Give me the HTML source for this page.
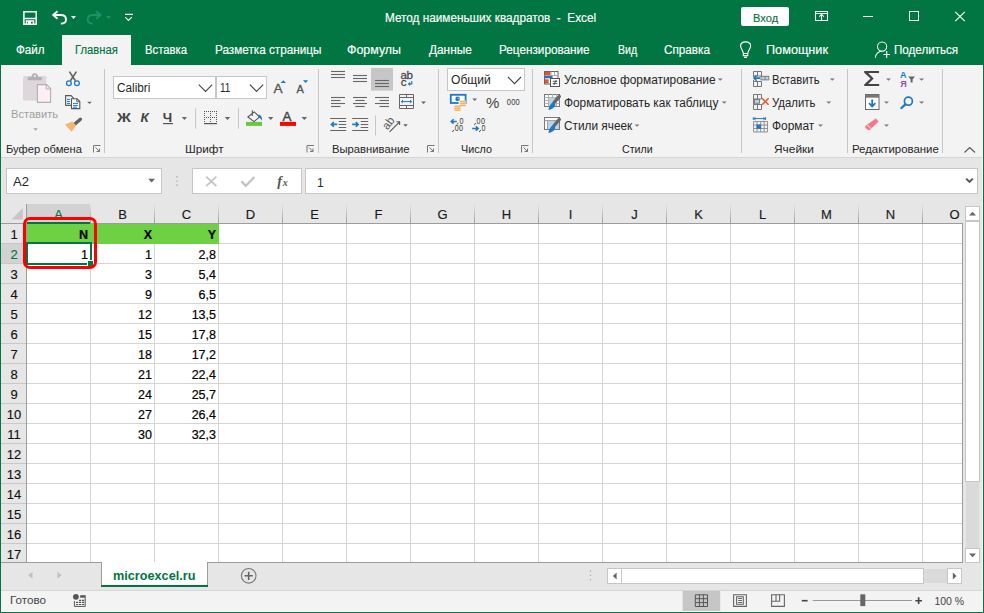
<!DOCTYPE html><html><head><meta charset="utf-8"><style>
*{margin:0;padding:0;box-sizing:border-box}
html,body{width:984px;height:613px;overflow:hidden;background:#f3f3f3;font-family:"Liberation Sans",sans-serif;position:relative}
.a{position:absolute}
.t{position:absolute;white-space:nowrap;line-height:1}

.rb{color:#262626;font-size:12px}
.gl{color:#262626;font-size:12px;top:144px}
.sep{position:absolute;width:1px;background:#d0d0d0}
svg{position:absolute;overflow:visible}
.ch{position:absolute;top:205px;height:19px;font-size:13px;color:#1a1a1a;text-align:center;line-height:20px;-webkit-text-stroke:0.15px currentColor}
.rh{position:absolute;left:1px;width:26px;height:20px;font-size:13px;color:#111;text-align:center;line-height:21px;-webkit-text-stroke:0.15px currentColor}
.c{position:absolute;font-size:12.5px;color:#000;text-align:right;line-height:22px;height:20px;padding-right:2px;-webkit-text-stroke:0.2px #000}
</style></head><body>
<div class="a" style="left:0;top:0;width:984px;height:65px;background:#017542"></div>
<div class="t" style="left:385px;top:12.3px;font-size:12px;color:#fff;transform:scaleX(0.9802);transform-origin:0 0;-webkit-text-stroke:0.15px #fff">Метод наименьших квадратов&nbsp; -&nbsp; Excel</div>
<div class="a" style="left:62px;top:35px;width:69px;height:30px;background:#f3f3f3"></div>
<div class="t" style="left:16px;top:43.6px;font-size:12px;color:#fff;transform:scaleX(0.9695);transform-origin:0 0;-webkit-text-stroke:0.15px currentColor">Файл</div>
<div class="t" style="left:74.8px;top:43.6px;font-size:12px;color:#017542;transform:scaleX(0.9349);transform-origin:0 0;-webkit-text-stroke:0.15px currentColor">Главная</div>
<div class="t" style="left:145px;top:43.6px;font-size:12px;color:#fff;transform:scaleX(0.9418);transform-origin:0 0;-webkit-text-stroke:0.15px currentColor">Вставка</div>
<div class="t" style="left:214.6px;top:43.6px;font-size:12px;color:#fff;transform:scaleX(0.9774);transform-origin:0 0;-webkit-text-stroke:0.15px currentColor">Разметка страницы</div>
<div class="t" style="left:347.4px;top:43.6px;font-size:12px;color:#fff;transform:scaleX(1.0341);transform-origin:0 0;-webkit-text-stroke:0.15px currentColor">Формулы</div>
<div class="t" style="left:429px;top:43.6px;font-size:12px;color:#fff;transform:scaleX(0.9875);transform-origin:0 0;-webkit-text-stroke:0.15px currentColor">Данные</div>
<div class="t" style="left:499.3px;top:43.6px;font-size:12px;color:#fff;transform:scaleX(0.9781);transform-origin:0 0;-webkit-text-stroke:0.15px currentColor">Рецензирование</div>
<div class="t" style="left:617.7px;top:43.6px;font-size:12px;color:#fff;transform:scaleX(0.8801);transform-origin:0 0;-webkit-text-stroke:0.15px currentColor">Вид</div>
<div class="t" style="left:664px;top:43.6px;font-size:12px;color:#fff;transform:scaleX(0.9771);transform-origin:0 0;-webkit-text-stroke:0.15px currentColor">Справка</div>
<div class="t" style="left:765.7px;top:43.6px;font-size:12px;color:#fff;transform:scaleX(1.0567);transform-origin:0 0;-webkit-text-stroke:0.15px currentColor">Помощник</div>
<div class="t" style="left:894.4px;top:43.6px;font-size:12px;color:#fff;transform:scaleX(0.9673);transform-origin:0 0;-webkit-text-stroke:0.15px currentColor">Поделиться</div>
<svg class="a" style="left:0;top:0" width="984" height="160" viewBox="0 0 984 160"><path d="M23.9,11.8 H36.2 V24.2 H23.9 Z M24.3,18.6 H35.7 M26.5,24 V20.9 H33.5 V24 M28.8,24 V22.4 H30.2 V24" fill="none" stroke="#fff" stroke-width="1.5"/><path d="M57.5,11.2 L53.2,15 L57.5,18.8 M53.4,15 H60.5 C63.8,15 66,16.8 66,19.4 C66,22 63.8,23.6 60.8,23.6" fill="none" stroke="#fff" stroke-width="1.9"/><path d="M71,16 H76 L73.5,19 Z" fill="#fff"/><path d="M96.2,11.2 L100.5,15 L96.2,18.8 M100.3,15 H93.2 C89.9,15 87.7,16.8 87.7,19.4 C87.7,22 89.9,23.6 92.9,23.6" fill="none" stroke="#1f9068" stroke-width="1.9"/><path d="M106,16 H111 L108.5,19 Z" fill="#1f9068"/><path d="M125,14.4 H133 M125.2,17.1 L128.5,20.4 L131.8,17.1" fill="none" stroke="#fff" stroke-width="1.2"/><rect x="741" y="7" width="48" height="19" rx="2" fill="#fff"/><path d="M815.5,11.5 H827.5 V20.5 H815.5 Z M815.5,13.5 H827.5 M821.5,20.5 V14 M819.3,16.6 L821.5,14.4 L823.7,16.6" fill="none" stroke="#fff" stroke-width="1.1"/><path d="M863,16.5 H873" stroke="#fff" stroke-width="1"/><rect x="909.5" y="11.5" width="9" height="9" fill="none" stroke="#fff" stroke-width="1"/><path d="M955.2,11.8 L964.8,21.2 M964.8,11.8 L955.2,21.2" stroke="#fff" stroke-width="1.1"/><path d="M743.3,53.5 C743.3,50.5 740.6,49 740.6,46 C740.6,42.9 743,41.9 745.5,41.9 C748,41.9 750.6,42.9 750.6,46 C750.6,49 747.8,50.5 747.8,53.5 Z M743.3,53.5 V55.6 H747.8 V53.5 M744,57.4 H747" fill="none" stroke="#fff" stroke-width="1.1"/><circle cx="882.1" cy="46.6" r="4.6" fill="none" stroke="#fff" stroke-width="1.1"/><path d="M875.3,57.8 C875.8,54 878.2,51.4 882,51.2 M883.4,54.5 H890 M886.7,51.1 V58" fill="none" stroke="#fff" stroke-width="1.1"/><path d="M104.5,69 V153" stroke="#c6c6c6" stroke-width="1"/><path d="M318.5,69 V153" stroke="#c6c6c6" stroke-width="1"/><path d="M438.5,69 V153" stroke="#c6c6c6" stroke-width="1"/><path d="M532.5,69 V153" stroke="#c6c6c6" stroke-width="1"/><path d="M741.5,69 V153" stroke="#c6c6c6" stroke-width="1"/><path d="M847.5,69 V153" stroke="#c6c6c6" stroke-width="1"/><path d="M942.5,69 V153" stroke="#c6c6c6" stroke-width="1"/><path d="M93.5,152.5 V145.5 H100.5 M95.5,147.5 L99.5,151.5 M96.5,151.5 H99.5 V148.5" fill="none" stroke="#777" stroke-width="1"/><path d="M307.0,152.5 V145.5 H314.0 M309.0,147.5 L313.0,151.5 M310.0,151.5 H313.0 V148.5" fill="none" stroke="#777" stroke-width="1"/><path d="M427.5,152.5 V145.5 H434.5 M429.5,147.5 L433.5,151.5 M430.5,151.5 H433.5 V148.5" fill="none" stroke="#777" stroke-width="1"/><path d="M521.5,152.5 V145.5 H528.5 M523.5,147.5 L527.5,151.5 M524.5,151.5 H527.5 V148.5" fill="none" stroke="#777" stroke-width="1"/><path d="M964.5,152.5 L969.7,147.5 L975,152.5" fill="none" stroke="#555" stroke-width="1.1"/><rect x="23" y="76" width="23.4" height="24.5" rx="1.5" fill="#ddd6da"/><path d="M27.8,80.3 V77 H31.5 C31.5,74.8 32.8,73.2 34.8,73.2 C36.8,73.2 38.1,74.8 38.1,77 H41.8 V80.3 Z" fill="#b5aeb2"/><circle cx="34.8" cy="76" r="1.1" fill="#f3f3f3"/><path d="M37.4,84.6 H46.6 L50.6,88.6 V102.4 H37.4 Z" fill="#fbeef4" stroke="#b5aeb2" stroke-width="1.1"/><path d="M46.2,84.6 V89 H50.6" fill="none" stroke="#b5aeb2" stroke-width="1"/><path d="M33.3,128.3 H37.8 L35.55,130.8 Z" fill="#a6a6a6"/><path d="M69.4,71.6 L75.4,80.8 M76.4,71.6 L70.4,80.8" stroke="#666" stroke-width="1.7"/><circle cx="68.9" cy="83.3" r="2.4" fill="none" stroke="#1e78c4" stroke-width="1.3"/><circle cx="76.9" cy="83.3" r="2.4" fill="none" stroke="#1e78c4" stroke-width="1.3"/><path d="M65.6,105.4 V95.6 H71 L73.6,98.2 V99" fill="none" stroke="#555" stroke-width="1.1"/><path d="M65.6,105.4 H71" fill="none" stroke="#555" stroke-width="1.1"/><path d="M71.5,108.6 V98.8 H77 L79.8,101.6 V108.6 Z" fill="#fff" stroke="#555" stroke-width="1.1"/><path d="M76.8,98.8 V101.8 H79.8" fill="none" stroke="#555" stroke-width="0.9"/><path d="M67,99.4 H70 M67,101.6 H70 M67,103.6 H70 M73,103.4 H78 M73,105.4 H78 M73,107.2 H77" stroke="#1e78c4" stroke-width="1"/><path d="M87.2,101.8 H91.8 L89.5,104 Z" fill="#666"/><path d="M80.4,119.2 L74.6,124.2" stroke="#606060" stroke-width="3.4" stroke-linecap="round"/><path d="M65,124.6 L72.4,121.6 L76.2,125.6 L71.6,131.8 Z" fill="#f6b46c"/><rect x="113.5" y="76.5" width="102" height="22" fill="#fff" stroke="#c6c6c6"/><rect x="216.5" y="76.5" width="50" height="22" fill="#fff" stroke="#c6c6c6"/><path d="M198.8,84.6 L205.5,91.4 L212.2,84.6 M249.9,84.6 L256.5,91.4 L263.2,84.6" fill="none" stroke="#444" stroke-width="1.1"/><path d="M280.6,83 L283.3,80.3 L286,83 Z M303,80.3 H308.2 L305.6,83 Z" fill="#1e78c4"/><path d="M181.8,117 H187 L184.4,120 Z M224.7,117 H230.3 L227.5,120 Z M268,117 H273.4 L270.7,120 Z M301.5,117 H307.2 L304.3,120 Z" fill="#666"/><path d="M163.1,123.6 H173" stroke="#4a4a4a" stroke-width="1.1"/><path d="M195.6,108 V128.7 M238.5,108 V128.7" stroke="#c6c6c6" stroke-width="1"/><rect x="204" y="111" width="1" height="1" fill="#555"/><rect x="206" y="111" width="1" height="1" fill="#555"/><rect x="208" y="111" width="1" height="1" fill="#555"/><rect x="210" y="111" width="1" height="1" fill="#555"/><rect x="212" y="111" width="1" height="1" fill="#555"/><rect x="214" y="111" width="1" height="1" fill="#555"/><rect x="216" y="111" width="1" height="1" fill="#555"/><rect x="204" y="117" width="1" height="1" fill="#555"/><rect x="206" y="117" width="1" height="1" fill="#555"/><rect x="208" y="117" width="1" height="1" fill="#555"/><rect x="210" y="117" width="1" height="1" fill="#555"/><rect x="212" y="117" width="1" height="1" fill="#555"/><rect x="214" y="117" width="1" height="1" fill="#555"/><rect x="216" y="117" width="1" height="1" fill="#555"/><rect x="204" y="113" width="1" height="1" fill="#555"/><rect x="210" y="113" width="1" height="1" fill="#555"/><rect x="216" y="113" width="1" height="1" fill="#555"/><rect x="204" y="115" width="1" height="1" fill="#555"/><rect x="210" y="115" width="1" height="1" fill="#555"/><rect x="216" y="115" width="1" height="1" fill="#555"/><rect x="204" y="119" width="1" height="1" fill="#555"/><rect x="210" y="119" width="1" height="1" fill="#555"/><rect x="216" y="119" width="1" height="1" fill="#555"/><rect x="204" y="121" width="1" height="1" fill="#555"/><rect x="210" y="121" width="1" height="1" fill="#555"/><rect x="216" y="121" width="1" height="1" fill="#555"/><rect x="204" y="123" width="13" height="1.2" fill="#555"/><path d="M252.3,110.3 V116 M247.9,117 L254.3,111.9 L259.6,117 L254,121.6 Z" fill="none" stroke="#555" stroke-width="1.1"/><path d="M258.6,114.6 C261.2,115.4 262.6,117.6 261.8,120.8 C261,119.2 260.2,118 259,117.4 Z" fill="#1e78c4"/><rect x="246" y="121.9" width="16.1" height="4" fill="#6cc644"/><rect x="280" y="121.9" width="16" height="4" fill="#ff0000"/><path d="M331,71.5 H345" stroke="#666" stroke-width="1.1"/><path d="M331,74.5 H345" stroke="#666" stroke-width="1.1"/><path d="M331,77.5 H345" stroke="#666" stroke-width="1.1"/><path d="M353,75.5 H367" stroke="#666" stroke-width="1.1"/><path d="M353,78.5 H367" stroke="#666" stroke-width="1.1"/><path d="M353,81.5 H367" stroke="#666" stroke-width="1.1"/><rect x="371" y="68" width="22" height="22.6" fill="#c6c6c6"/><path d="M375,80.5 H389" stroke="#666" stroke-width="1.1"/><path d="M375,83.5 H389" stroke="#666" stroke-width="1.1"/><path d="M375,86.5 H389" stroke="#666" stroke-width="1.1"/><text x="400.6" y="78.8" font-family="Liberation Sans" font-size="11.6" fill="#4a4a4a" stroke="#4a4a4a" stroke-width="0.3" letter-spacing="-0.5">ab</text><text x="400.8" y="86.3" font-family="Liberation Sans" font-size="11.6" fill="#4a4a4a" stroke="#4a4a4a" stroke-width="0.3">c</text><path d="M411.8,81 V83.9 H408.6 M410,82.5 L408.6,83.9 L410,85.3" fill="none" stroke="#1e78c4" stroke-width="1.1"/><path d="M331,97.5 H345" stroke="#666" stroke-width="1.1"/><path d="M353,97.5 H367" stroke="#666" stroke-width="1.1"/><path d="M375,97.5 H389" stroke="#666" stroke-width="1.1"/><path d="M331,100.5 H340.5" stroke="#666" stroke-width="1.1"/><path d="M355.3,100.5 H364.7" stroke="#666" stroke-width="1.1"/><path d="M379.5,100.5 H389" stroke="#666" stroke-width="1.1"/><path d="M331,103.5 H345" stroke="#666" stroke-width="1.1"/><path d="M353,103.5 H367" stroke="#666" stroke-width="1.1"/><path d="M375,103.5 H389" stroke="#666" stroke-width="1.1"/><path d="M331,106.5 H340.5" stroke="#666" stroke-width="1.1"/><path d="M355.3,106.5 H364.7" stroke="#666" stroke-width="1.1"/><path d="M379.5,106.5 H389" stroke="#666" stroke-width="1.1"/><path d="M399.5,94.5 H413.5 V108.5 H399.5 Z M399.5,97.5 H413.5 M399.5,105.5 H413.5 M406.5,94.5 V97.5 M406.5,105.5 V108.5" fill="none" stroke="#666" stroke-width="1"/><path d="M401.4,101.6 H411.6 M403,100 L401.4,101.6 L403,103.2 M410,100 L411.6,101.6 L410,103.2" fill="none" stroke="#1e78c4" stroke-width="1"/><path d="M421,101.4 H426 L423.5,104 Z M403.2,124.3 H407.8 L405.5,126.7 Z" fill="#666"/><path d="M330.2,118.5 H346.2 M338.7,121.5 H346.2 M338.7,124.5 H346.2 M338.7,127.5 H346.2 M330.2,130.5 H346.2" stroke="#666" stroke-width="1.1"/><path d="M337.2,124.4 H331.4 M333.8,122 L331.4,124.4 L333.8,126.8" fill="none" stroke="#1e78c4" stroke-width="1.6"/><path d="M352.2,118.5 H368.2 M360.7,121.5 H368.2 M360.7,124.5 H368.2 M360.7,127.5 H368.2 M352.2,130.5 H368.2" stroke="#666" stroke-width="1.1"/><path d="M352.2,124.4 H358.2 M355.8,122 L358.2,124.4 L355.8,126.8" fill="none" stroke="#1e78c4" stroke-width="1.6"/><path d="M375.5,115.5 V135.5" stroke="#c6c6c6" stroke-width="1"/><text x="0" y="0" font-family="Liberation Sans" font-size="11.5" fill="#555" letter-spacing="-0.3" transform="translate(387.6,130.4) rotate(-52)">ab</text><path d="M389.6,131.8 L399.6,121.8 M396.4,121.8 H399.6 V125" fill="none" stroke="#555" stroke-width="1.1"/><rect x="447.5" y="68.5" width="77" height="22" fill="#fff" stroke="#c6c6c6"/><path d="M508,77 L514.5,83.6 L521,77" fill="none" stroke="#444" stroke-width="1.1"/><rect x="450.8" y="94.8" width="14.8" height="8.2" fill="#fff" stroke="#1e78c4" stroke-width="1.8"/><circle cx="457.6" cy="98.9" r="2.3" fill="#1e78c4"/><circle cx="458.4" cy="98.3" r="0.9" fill="#7fb6e6"/><path d="M465.8,100.6 L458.6,100.6 L458.6,104 L456.6,104 L456.6,106 L465.8,106 Z" fill="#f3f3f3"/><rect x="459.6" y="100.8" width="6.4" height="1.4" rx="0.7" fill="#f4b266"/><rect x="459.6" y="102.8" width="6.4" height="1.4" rx="0.7" fill="#f4b266"/><rect x="459.6" y="104.8" width="6.4" height="1.4" rx="0.7" fill="#f4b266"/><rect x="454.2" y="105.6" width="6.6" height="1.4" rx="0.7" fill="#f4b266"/><rect x="454.2" y="107.6" width="6.6" height="1.4" rx="0.7" fill="#f4b266"/><rect x="454.2" y="109.6" width="6.6" height="1.4" rx="0.7" fill="#f4b266"/><path d="M472.3,98.6 H477.1 L474.7,101 Z" fill="#666"/><text x="486" y="107.9" font-family="Liberation Sans" font-size="15" fill="#444">%</text><text transform="translate(506.8,105.1) scale(0.78,1)" font-family="Liberation Sans" font-size="9.6" fill="#333" letter-spacing="0.3">000</text><text transform="translate(459.5,123.9) scale(0.76,1)" font-family="Liberation Sans" font-size="9.4" fill="#333" letter-spacing="0.6">0</text><text transform="translate(454.7,131.2) scale(0.76,1)" font-family="Liberation Sans" font-size="9.4" fill="#333" letter-spacing="0.6">00</text><text transform="translate(476.6,123.9) scale(0.76,1)" font-family="Liberation Sans" font-size="9.4" fill="#333" letter-spacing="0.6">00</text><text transform="translate(481.6,131.2) scale(0.76,1)" font-family="Liberation Sans" font-size="9.4" fill="#333" letter-spacing="0.6">0</text><path d="M458.2,122.9 L457.1,124.6 M453.8,129.9 L452.4,132 M475.8,123 L474.3,125 M480.7,130 L479.3,132" stroke="#333" stroke-width="0.9"/><path d="M456.8,121.4 H451.2 M453.6,119.2 L451.2,121.4 L453.6,123.6" fill="none" stroke="#1e78c4" stroke-width="1.5"/><path d="M472.2,128.4 H478.2 M475.8,126.2 L478.2,128.4 L475.8,130.6" fill="none" stroke="#1e78c4" stroke-width="1.5"/><rect x="544.5" y="71.5" width="13.5" height="12.5" fill="#fff" stroke="#666" stroke-width="1"/><rect x="545" y="72" width="5.5" height="3.3" fill="#e8532b"/><rect x="545" y="76" width="7.6" height="2.3" fill="#1e78c4"/><rect x="545" y="79.3" width="3.6" height="4.2" fill="#e8532b"/><path d="M551,71.5 V76 M554.5,71.5 V76 M544.5,75.5 H558" stroke="#999" stroke-width="0.8"/><rect x="550.5" y="78.5" width="9" height="8" fill="#fff" stroke="#555" stroke-width="1"/><path d="M552.8,81.3 H557.3 M552.8,83.6 H557.3 M556.2,80 L553.9,85" stroke="#444" stroke-width="0.9"/><rect x="544.5" y="94.5" width="15" height="12" fill="#fff" stroke="#777" stroke-width="1"/><path d="M544.5,97.5 H559.5 M544.5,100.5 H559.5 M544.5,103.5 H559.5 M548.5,94 V106.5 M552.5,94 V106.5 M556.5,94 V106.5" stroke="#aaa" stroke-width="0.9"/><rect x="549" y="98" width="7" height="8" fill="#b9d3ea"/><path d="M559.4,96.4 L554.2,102.4" stroke="#666" stroke-width="3.2" stroke-linecap="round"/><path d="M553,102 C556,103 556,107 551.5,109 C549.8,109.8 548.5,110 548.3,109.8 C549,107 550.5,103.5 553,102 Z" fill="#1e78c4"/><rect x="544.5" y="117.5" width="15" height="12" fill="#fff" stroke="#777" stroke-width="1"/><path d="M544.5,120.5 H559.5 M547.5,120.5 V129.5" stroke="#999" stroke-width="0.9"/><rect x="548" y="121" width="11" height="8" fill="#b9d3ea"/><path d="M559.4,119.4 L554.2,125.4" stroke="#666" stroke-width="3.2" stroke-linecap="round"/><path d="M553,125 C556,126 556,130 551.5,132 C549.8,132.8 548.5,133 548.3,132.8 C549,130 550.5,126.5 553,125 Z" fill="#1e78c4"/><path d="M717.8,78.4 H722.7 L720.25,80.8 Z M721.8,101.4 H726.7 L724.25,103.8 Z M634.6,124.4 H639.4 L637,126.8 Z" fill="#777"/><path d="M753.5,71.5 H761.5 V76 H753.5 Z M757.5,71.5 V76 M753.5,81.5 H761.5 V86.5 H753.5 Z M757.5,81.5 V86.5 M753.5,76 V77 M753.5,80 V81.5" fill="none" stroke="#777" stroke-width="1"/><rect x="761" y="76.3" width="7.8" height="3.6" fill="#b9d3ea" stroke="#777" stroke-width="0.9"/><path d="M765,76.3 V79.9" stroke="#777" stroke-width="0.9"/><path d="M760,78.1 H754 M756.6,75.5 L754,78.1 L756.6,80.7" fill="none" stroke="#1e78c4" stroke-width="1.6"/><path d="M753.5,94.5 H761.5 V99 H753.5 Z M757.5,94.5 V99 M753.5,104.5 H761.5 V109.5 H753.5 Z M757.5,104.5 V109.5 M753.5,99 V104.5" fill="none" stroke="#777" stroke-width="1"/><rect x="754.5" y="99.5" width="5" height="3.8" fill="#b9d3ea" stroke="#777" stroke-width="0.9"/><path d="M762,98.2 L768.6,104.8 M768.6,98.2 L762,104.8" stroke="#e8532b" stroke-width="1.5"/><path d="M753.3,117.2 V120 M765.6,117.2 V120 M754,118.6 H765 M755.5,117.4 L754,118.6 L755.5,119.8 M763.5,117.4 L765,118.6 L763.5,119.8" fill="none" stroke="#1e78c4" stroke-width="1"/><path d="M753.5,121.5 H767.5 V132 H753.5 Z M753.5,125 H767.5 M753.5,128.5 H767.5 M757,121.5 V132 M760.7,121.5 V132 M764.2,121.5 V132" fill="none" stroke="#888" stroke-width="0.9"/><rect x="756.5" y="124.5" width="4.6" height="4.3" fill="#1e78c4"/><path d="M829.8,78.4 H834.7 L832.25,80.8 Z M826.3,101.4 H831.2 L828.75,103.8 Z M818,124.4 H823 L820.5,126.8 Z" fill="#777"/><path d="M864.2,71 H879 V73 H868.2 L873.6,78.6 L868.2,84.1 H879.2 V86.1 H864.2 V84.4 L870.6,78.6 L864.2,72.7 Z" fill="#444"/><text x="900" y="78.2" font-family="Liberation Sans" font-weight="bold" font-size="9" fill="#1e78c4">A</text><text x="900.2" y="87.2" font-family="Liberation Sans" font-weight="bold" font-size="9" fill="#8e4fb7">Я</text><path d="M908.2,76.4 H915 L912.6,79.6 V82.6 H910.6 V79.6 Z" fill="#666"/><rect x="865.5" y="94.5" width="13.5" height="15" fill="#fff" stroke="#666" stroke-width="1"/><rect x="865.5" y="94.5" width="13.5" height="3.2" fill="#777"/><path d="M872.2,99.5 V106 M869,103.2 L872.2,106.4 L875.4,103.2" fill="none" stroke="#1e78c4" stroke-width="1.8"/><circle cx="908.4" cy="101.2" r="4" fill="none" stroke="#1e78c4" stroke-width="1.7"/><path d="M905.4,104.3 L901.4,108" stroke="#1e78c4" stroke-width="2.3" stroke-linecap="round"/><path d="M875.8,118.6 L878.6,121.4 L870.4,129.6 C869.4,130.6 868.2,130.6 867.2,129.6 L865.8,128.2 C865,127.4 865,126.2 865.8,125.4 Z" fill="#f47a8a"/><path d="M866.8,124.4 L871.2,128.8" stroke="#f3f3f3" stroke-width="1"/><path d="M886,78.4 H891 L888.5,80.8 Z M919,78.4 H924.2 L921.6,80.8 Z M884,101.4 H889 L886.5,103.8 Z M919,101.4 H924.2 L921.6,103.8 Z M884,124.4 H889 L886.5,126.8 Z" fill="#777"/></svg>
<div class="t" style="left:752.7px;top:12.5px;font-size:11.5px;color:#0d6e3e;transform:scaleX(0.9648);transform-origin:0 0;-webkit-text-stroke:0.15px currentColor">Вход</div>
<div class="t" style="left:11px;top:108.5px;font-size:11px;color:#a0a0a0;transform:scaleX(1.0080);transform-origin:0 0">Вставить</div>
<div class="t" style="left:6.3px;top:142.6px;font-size:11.6px;color:#262626;transform:scaleX(0.9643);transform-origin:0 0">Буфер обмена</div>
<div class="t" style="left:184.5px;top:142.6px;font-size:11.6px;color:#262626;transform:scaleX(1.0094);transform-origin:0 0">Шрифт</div>
<div class="t" style="left:331.5px;top:142.6px;font-size:11.6px;color:#262626;transform:scaleX(0.9710);transform-origin:0 0">Выравнивание</div>
<div class="t" style="left:461px;top:142.6px;font-size:11.6px;color:#262626;transform:scaleX(0.9297);transform-origin:0 0">Число</div>
<div class="t" style="left:621.7px;top:142.6px;font-size:11.6px;color:#262626;transform:scaleX(0.9224);transform-origin:0 0">Стили</div>
<div class="t" style="left:774px;top:142.6px;font-size:11.6px;color:#262626;transform:scaleX(1.0285);transform-origin:0 0">Ячейки</div>
<div class="t" style="left:851.6px;top:142.6px;font-size:11.6px;color:#262626;transform:scaleX(0.9825);transform-origin:0 0">Редактирование</div>
<div class="t" style="left:116.7px;top:81.6px;font-size:12px;color:#262626;transform:scaleX(0.9815);transform-origin:0 0">Calibri</div>
<div class="t" style="left:219.8px;top:81.6px;font-size:12px;color:#262626;transform:scaleX(0.8351);transform-origin:0 0">11</div>
<div class="t" style="left:450.5px;top:74px;font-size:12.2px;color:#262626;transform:scaleX(0.9894);transform-origin:0 0">Общий</div>
<div class="t" style="left:563.5px;top:74.3px;font-size:12px;color:#262626;transform:scaleX(0.9925);transform-origin:0 0">Условное форматирование</div>
<div class="t" style="left:563.5px;top:97.4px;font-size:12px;color:#262626;transform:scaleX(0.9884);transform-origin:0 0">Форматировать как таблицу</div>
<div class="t" style="left:563.5px;top:120.2px;font-size:12px;color:#262626;transform:scaleX(0.9848);transform-origin:0 0">Стили ячеек</div>
<div class="t" style="left:772.2px;top:74px;font-size:12px;color:#262626;transform:scaleX(0.9359);transform-origin:0 0">Вставить</div>
<div class="t" style="left:772.2px;top:97.2px;font-size:12px;color:#262626;transform:scaleX(0.9473);transform-origin:0 0">Удалить</div>
<div class="t" style="left:772.2px;top:120.2px;font-size:12px;color:#262626;transform:scaleX(0.9900);transform-origin:0 0">Формат</div>
<div class="t" style="left:117.3px;top:111.3px;font-size:13.4px;color:#444;font-weight:bold;transform:scaleX(1.15);transform-origin:0 0">Ж</div>
<div class="t" style="left:140.5px;top:111.3px;font-size:13.4px;color:#444;font-weight:bold;font-style:italic">К</div>
<div class="t" style="left:162.8px;top:111.3px;font-size:13.4px;color:#444;font-weight:bold">Ч</div>
<div class="t" style="left:273.5px;top:82px;font-size:13.6px;color:#505050;-webkit-text-stroke:0.3px #505050">A</div>
<div class="t" style="left:296.5px;top:84.3px;font-size:11px;color:#505050;-webkit-text-stroke:0.3px #505050">A</div>
<div class="t" style="left:282.6px;top:110px;font-size:13.4px;color:#444;-webkit-text-stroke:0.4px #444">A</div>
<div class="a" style="left:0;top:157px;width:984px;height:1px;background:#d5d5d5"></div>
<div class="a" style="left:0;top:158px;width:984px;height:46px;background:#e6e6e6"></div>
<div class="a" style="left:6px;top:168px;width:156px;height:26px;background:#fff;border:1px solid #c6c6c6"></div>
<div class="t" style="left:13px;top:174.7px;font-size:13px;color:#262626;transform:scaleX(1.0059);transform-origin:0 0">A2</div>
<div class="a" style="left:192px;top:168px;width:110px;height:26px;background:#fff;border:1px solid #c6c6c6"></div>
<div class="a" style="left:305px;top:168px;width:673px;height:26px;background:#fff;border:1px solid #c6c6c6"></div>
<div class="t" style="left:317px;top:176.5px;font-size:12px;color:#262626">1</div>
<div class="a" style="left:0;top:204px;width:984px;height:359px;background:#e6e6e6"></div>
<div class="a" style="left:27px;top:224px;width:935px;height:338px;background:#fff"></div>
<div class="a" style="left:1px;top:223px;width:961px;height:1px;background:#9c9c9c"></div>
<div class="a" style="left:26px;top:204px;width:1px;height:358px;background:#9c9c9c"></div>
<div class="a" style="left:962px;top:223px;width:1px;height:340px;background:#9c9c9c"></div>
<div class="a" style="left:90px;top:224px;width:1px;height:338px;background:#d4d4d4"></div>
<div class="a" style="left:90px;top:204px;width:1px;height:19px;background:linear-gradient(#e6e6e6,#9c9c9c)"></div>
<div class="a" style="left:154px;top:224px;width:1px;height:338px;background:#d4d4d4"></div>
<div class="a" style="left:154px;top:204px;width:1px;height:19px;background:linear-gradient(#e6e6e6,#9c9c9c)"></div>
<div class="a" style="left:218px;top:224px;width:1px;height:338px;background:#d4d4d4"></div>
<div class="a" style="left:218px;top:204px;width:1px;height:19px;background:linear-gradient(#e6e6e6,#9c9c9c)"></div>
<div class="a" style="left:282px;top:224px;width:1px;height:338px;background:#d4d4d4"></div>
<div class="a" style="left:282px;top:204px;width:1px;height:19px;background:linear-gradient(#e6e6e6,#9c9c9c)"></div>
<div class="a" style="left:346px;top:224px;width:1px;height:338px;background:#d4d4d4"></div>
<div class="a" style="left:346px;top:204px;width:1px;height:19px;background:linear-gradient(#e6e6e6,#9c9c9c)"></div>
<div class="a" style="left:410px;top:224px;width:1px;height:338px;background:#d4d4d4"></div>
<div class="a" style="left:410px;top:204px;width:1px;height:19px;background:linear-gradient(#e6e6e6,#9c9c9c)"></div>
<div class="a" style="left:474px;top:224px;width:1px;height:338px;background:#d4d4d4"></div>
<div class="a" style="left:474px;top:204px;width:1px;height:19px;background:linear-gradient(#e6e6e6,#9c9c9c)"></div>
<div class="a" style="left:538px;top:224px;width:1px;height:338px;background:#d4d4d4"></div>
<div class="a" style="left:538px;top:204px;width:1px;height:19px;background:linear-gradient(#e6e6e6,#9c9c9c)"></div>
<div class="a" style="left:602px;top:224px;width:1px;height:338px;background:#d4d4d4"></div>
<div class="a" style="left:602px;top:204px;width:1px;height:19px;background:linear-gradient(#e6e6e6,#9c9c9c)"></div>
<div class="a" style="left:666px;top:224px;width:1px;height:338px;background:#d4d4d4"></div>
<div class="a" style="left:666px;top:204px;width:1px;height:19px;background:linear-gradient(#e6e6e6,#9c9c9c)"></div>
<div class="a" style="left:730px;top:224px;width:1px;height:338px;background:#d4d4d4"></div>
<div class="a" style="left:730px;top:204px;width:1px;height:19px;background:linear-gradient(#e6e6e6,#9c9c9c)"></div>
<div class="a" style="left:794px;top:224px;width:1px;height:338px;background:#d4d4d4"></div>
<div class="a" style="left:794px;top:204px;width:1px;height:19px;background:linear-gradient(#e6e6e6,#9c9c9c)"></div>
<div class="a" style="left:858px;top:224px;width:1px;height:338px;background:#d4d4d4"></div>
<div class="a" style="left:858px;top:204px;width:1px;height:19px;background:linear-gradient(#e6e6e6,#9c9c9c)"></div>
<div class="a" style="left:922px;top:224px;width:1px;height:338px;background:#d4d4d4"></div>
<div class="a" style="left:922px;top:204px;width:1px;height:19px;background:linear-gradient(#e6e6e6,#9c9c9c)"></div>
<div class="a" style="left:27px;top:243px;width:935px;height:1px;background:#d4d4d4"></div>
<div class="a" style="left:1px;top:243px;width:25px;height:1px;background:#c8c8c8"></div>
<div class="a" style="left:27px;top:263px;width:935px;height:1px;background:#d4d4d4"></div>
<div class="a" style="left:1px;top:263px;width:25px;height:1px;background:#c8c8c8"></div>
<div class="a" style="left:27px;top:283px;width:935px;height:1px;background:#d4d4d4"></div>
<div class="a" style="left:1px;top:283px;width:25px;height:1px;background:#c8c8c8"></div>
<div class="a" style="left:27px;top:303px;width:935px;height:1px;background:#d4d4d4"></div>
<div class="a" style="left:1px;top:303px;width:25px;height:1px;background:#c8c8c8"></div>
<div class="a" style="left:27px;top:323px;width:935px;height:1px;background:#d4d4d4"></div>
<div class="a" style="left:1px;top:323px;width:25px;height:1px;background:#c8c8c8"></div>
<div class="a" style="left:27px;top:343px;width:935px;height:1px;background:#d4d4d4"></div>
<div class="a" style="left:1px;top:343px;width:25px;height:1px;background:#c8c8c8"></div>
<div class="a" style="left:27px;top:363px;width:935px;height:1px;background:#d4d4d4"></div>
<div class="a" style="left:1px;top:363px;width:25px;height:1px;background:#c8c8c8"></div>
<div class="a" style="left:27px;top:383px;width:935px;height:1px;background:#d4d4d4"></div>
<div class="a" style="left:1px;top:383px;width:25px;height:1px;background:#c8c8c8"></div>
<div class="a" style="left:27px;top:403px;width:935px;height:1px;background:#d4d4d4"></div>
<div class="a" style="left:1px;top:403px;width:25px;height:1px;background:#c8c8c8"></div>
<div class="a" style="left:27px;top:423px;width:935px;height:1px;background:#d4d4d4"></div>
<div class="a" style="left:1px;top:423px;width:25px;height:1px;background:#c8c8c8"></div>
<div class="a" style="left:27px;top:443px;width:935px;height:1px;background:#d4d4d4"></div>
<div class="a" style="left:1px;top:443px;width:25px;height:1px;background:#c8c8c8"></div>
<div class="a" style="left:27px;top:463px;width:935px;height:1px;background:#d4d4d4"></div>
<div class="a" style="left:1px;top:463px;width:25px;height:1px;background:#c8c8c8"></div>
<div class="a" style="left:27px;top:483px;width:935px;height:1px;background:#d4d4d4"></div>
<div class="a" style="left:1px;top:483px;width:25px;height:1px;background:#c8c8c8"></div>
<div class="a" style="left:27px;top:503px;width:935px;height:1px;background:#d4d4d4"></div>
<div class="a" style="left:1px;top:503px;width:25px;height:1px;background:#c8c8c8"></div>
<div class="a" style="left:27px;top:523px;width:935px;height:1px;background:#d4d4d4"></div>
<div class="a" style="left:1px;top:523px;width:25px;height:1px;background:#c8c8c8"></div>
<div class="a" style="left:27px;top:543px;width:935px;height:1px;background:#d4d4d4"></div>
<div class="a" style="left:1px;top:543px;width:25px;height:1px;background:#c8c8c8"></div>
<div class="a" style="left:27px;top:224px;width:192px;height:20px;background:#6dd143"></div>
<div class="a" style="left:27px;top:204px;width:63px;height:19px;background:#d2d2d2"></div>
<div class="a" style="left:27px;top:222px;width:63px;height:2px;background:#017542"></div>
<div class="a" style="left:1px;top:244px;width:25px;height:19px;background:#d2d2d2"></div>
<div class="a" style="left:25px;top:244px;width:2px;height:19px;background:#017542"></div>
<div class="ch" style="left:27px;width:63px;color:#017542">A</div>
<div class="ch" style="left:91px;width:63px">B</div>
<div class="ch" style="left:155px;width:63px">C</div>
<div class="ch" style="left:219px;width:63px">D</div>
<div class="ch" style="left:283px;width:63px">E</div>
<div class="ch" style="left:347px;width:63px">F</div>
<div class="ch" style="left:411px;width:63px">G</div>
<div class="ch" style="left:475px;width:63px">H</div>
<div class="ch" style="left:539px;width:63px">I</div>
<div class="ch" style="left:603px;width:63px">J</div>
<div class="ch" style="left:667px;width:63px">K</div>
<div class="ch" style="left:731px;width:63px">L</div>
<div class="ch" style="left:795px;width:63px">M</div>
<div class="ch" style="left:859px;width:63px">N</div>
<div class="ch" style="left:923px;width:63px">O</div>
<div class="rh" style="top:224px">1</div>
<div class="rh" style="top:244px;color:#017542">2</div>
<div class="rh" style="top:264px">3</div>
<div class="rh" style="top:284px">4</div>
<div class="rh" style="top:304px">5</div>
<div class="rh" style="top:324px">6</div>
<div class="rh" style="top:344px">7</div>
<div class="rh" style="top:364px">8</div>
<div class="rh" style="top:384px">9</div>
<div class="rh" style="top:404px">10</div>
<div class="rh" style="top:424px">11</div>
<div class="rh" style="top:444px">12</div>
<div class="rh" style="top:464px">13</div>
<div class="rh" style="top:484px">14</div>
<div class="rh" style="top:504px">15</div>
<div class="rh" style="top:524px">16</div>
<div class="rh" style="top:544px">17</div>
<div class="c" style="left:27px;top:224px;width:63px;font-weight:bold">N</div>
<div class="c" style="left:91px;top:224px;width:63px;font-weight:bold">X</div>
<div class="c" style="left:155px;top:224px;width:63px;font-weight:bold">Y</div>
<div class="c" style="left:27px;top:244px;width:63px">1</div>
<div class="c" style="left:91px;top:244px;width:63px">1</div>
<div class="c" style="left:155px;top:244px;width:63px">2,8</div>
<div class="c" style="left:91px;top:264px;width:63px">3</div>
<div class="c" style="left:155px;top:264px;width:63px">5,4</div>
<div class="c" style="left:91px;top:284px;width:63px">9</div>
<div class="c" style="left:155px;top:284px;width:63px">6,5</div>
<div class="c" style="left:91px;top:304px;width:63px">12</div>
<div class="c" style="left:155px;top:304px;width:63px">13,5</div>
<div class="c" style="left:91px;top:324px;width:63px">15</div>
<div class="c" style="left:155px;top:324px;width:63px">17,8</div>
<div class="c" style="left:91px;top:344px;width:63px">18</div>
<div class="c" style="left:155px;top:344px;width:63px">17,2</div>
<div class="c" style="left:91px;top:364px;width:63px">21</div>
<div class="c" style="left:155px;top:364px;width:63px">22,4</div>
<div class="c" style="left:91px;top:384px;width:63px">24</div>
<div class="c" style="left:155px;top:384px;width:63px">25,7</div>
<div class="c" style="left:91px;top:404px;width:63px">27</div>
<div class="c" style="left:155px;top:404px;width:63px">26,4</div>
<div class="c" style="left:91px;top:424px;width:63px">30</div>
<div class="c" style="left:155px;top:424px;width:63px">32,3</div>
<div class="a" style="left:26px;top:242px;width:66px;height:23px;border:2px solid #017542"></div>
<div class="a" style="left:87px;top:260px;width:7px;height:7px;background:#017542;border:1px solid #fff"></div>
<div class="a" style="left:23px;top:217px;width:74px;height:52px;border:3px solid #ff0000;border-radius:7px"></div>
<div class="a" style="left:0;top:562px;width:984px;height:1px;background:#9c9c9c"></div>
<div class="a" style="left:0;top:563px;width:984px;height:27px;background:#e6e6e6"></div>
<div class="a" style="left:0;top:590px;width:984px;height:1px;background:#d5d5d5"></div>
<div class="a" style="left:0;top:591px;width:984px;height:22px;background:#f3f3f3"></div>
<div class="t" style="left:9.5px;top:595px;font-size:11.5px;color:#444;transform:scaleX(1.0108);transform-origin:0 0">Готово</div>
<svg class="a" style="left:0;top:160px" width="984" height="453" viewBox="0 160 984 453"><path d="M148.2,178.8 H155 L151.6,182.4 Z" fill="#666"/><path d="M177,176.2 V177.4 M177,180.4 V181.6 M177,184.6 V185.8" stroke="#999" stroke-width="1.2"/><path d="M206.2,176.6 L216.4,186.2 M216.4,176.6 L206.2,186.2" stroke="#c4c4c4" stroke-width="1.8"/><path d="M241.4,181.4 L245.8,185.8 L254.4,177" fill="none" stroke="#c4c4c4" stroke-width="2.4"/><text x="277.2" y="185.6" font-family="Liberation Serif" font-style="italic" font-weight="bold" font-size="14" fill="#555">f</text><text x="282.8" y="186.4" font-family="Liberation Serif" font-style="italic" font-weight="bold" font-size="10" fill="#555">x</text><path d="M966.2,178.6 L969.5,182 L972.8,178.6" fill="none" stroke="#555" stroke-width="1.9"/><path d="M22.8,208 V219.6 H11.4 Z" fill="#c6c6c6"/><rect x="963" y="204" width="20" height="359" fill="#e6e6e6"/><rect x="965.5" y="206.5" width="14" height="14" fill="#fff" stroke="#c6c6c6"/><path d="M969,215.6 H976 L972.5,211.8 Z" fill="#666"/><rect x="965.5" y="221.5" width="14" height="260" fill="#fff" stroke="#c6c6c6"/><rect x="966" y="482" width="13" height="66" fill="#dadada"/><rect x="965.5" y="548.5" width="14" height="14" fill="#fff" stroke="#c6c6c6"/><path d="M969,553.4 H976 L972.5,557.2 Z" fill="#666"/><rect x="101" y="562" width="107" height="24" fill="#fff"/><path d="M101.5,562 V586 M207.5,562 V586" fill="none" stroke="#9c9c9c" stroke-width="1"/><rect x="101" y="585" width="107" height="2" fill="#017542"/><path d="M32.5,571.8 V578.8 L28,575.3 Z M57.3,571.8 V578.8 L61.6,575.3 Z" fill="#c2c2c2"/><circle cx="248.7" cy="575.8" r="7.3" fill="none" stroke="#777" stroke-width="1.1"/><path d="M244.6,575.8 H252.8 M248.7,571.7 V579.9" stroke="#666" stroke-width="1.6"/><path d="M590.5,570.5 V571.7 M590.5,574.8 V576 M590.5,579 V580.2" stroke="#aaa" stroke-width="1.2"/><rect x="607.5" y="568.5" width="14" height="15" fill="#fff" stroke="#c6c6c6"/><path d="M616.6,572.6 V579.6 L612.8,576.1 Z" fill="#666"/><rect x="621.5" y="568.5" width="302" height="15" fill="#fff" stroke="#c6c6c6"/><rect x="924" y="569" width="23" height="14" fill="#dadada"/><rect x="947.5" y="568.5" width="14" height="15" fill="#fff" stroke="#c6c6c6"/><path d="M952.8,572.6 V579.6 L956.6,576.1 Z" fill="#666"/><circle cx="75.9" cy="596.8" r="2.9" fill="#555"/><rect x="80.2" y="595.2" width="5.5" height="2.5" fill="#555"/><path d="M85.2,597.5 V606.4 H74.4 V601" fill="none" stroke="#555" stroke-width="1"/><path d="M79,600.4 H81.2 M82,600.4 H84.2 M76,602.4 H78.2 M79,602.4 H81.2 M82,602.4 H84.2 M76,604.5 H78.2 M79,604.5 H81.2 M82,604.5 H84.2" stroke="#555" stroke-width="1.1"/><rect x="682.7" y="591" width="37.5" height="22" fill="#c6c6c6"/><path d="M695.3,594.8 H707.5 V606.5 H695.3 Z M695.3,598.7 H707.5 M695.3,602.6 H707.5 M699.4,594.8 V606.5 M703.4,594.8 V606.5" fill="none" stroke="#555" stroke-width="1"/><path d="M733.6,594.7 H746.4 V606.4 H733.6 Z M736.6,596.8 H743.3 V604.3 H736.6 Z M738.2,598.5 H742 M738.2,600.5 H742 M738.2,602.5 H742" fill="none" stroke="#666" stroke-width="1.1"/><path d="M771.6,594.7 H784.4 V606.4 H771.6 Z M776,594.7 V601.3 M779.6,594.7 V601.3 H771.6" fill="none" stroke="#666" stroke-width="1.1"/><path d="M801.8,600.7 H807.6" stroke="#444" stroke-width="1.6"/><path d="M812.7,600.5 H912" stroke="#999" stroke-width="1"/><rect x="860.3" y="594.3" width="5" height="11.8" fill="#666"/><path d="M915.3,600.7 H922 M918.65,597.3 V604.1" stroke="#444" stroke-width="1.6"/></svg>
<div class="t" style="left:113.1px;top:570px;font-size:12.6px;color:#017542;transform:scaleX(1.0062);transform-origin:0 0;font-weight:bold">microexcel.ru</div>
<div class="t" style="left:934.4px;top:596px;font-size:10.5px;color:#444">100 %</div>
<div class="a" style="left:1px;top:65px;width:1px;height:92px;background:#fbf7f9"></div>
<div class="a" style="left:1px;top:591px;width:1px;height:21px;background:#fbf7f9"></div>
<div class="a" style="left:982px;top:65px;width:1px;height:547px;background:#fbf7f9"></div>
<div class="a" style="left:1px;top:611px;width:982px;height:1px;background:#fbf7f9"></div>
<div class="a" style="left:0;top:0;width:1px;height:613px;background:#017542"></div>
<div class="a" style="left:983px;top:0;width:1px;height:613px;background:#017542"></div>
<div class="a" style="left:0;top:612px;width:984px;height:1px;background:#017542"></div>
</body></html>
